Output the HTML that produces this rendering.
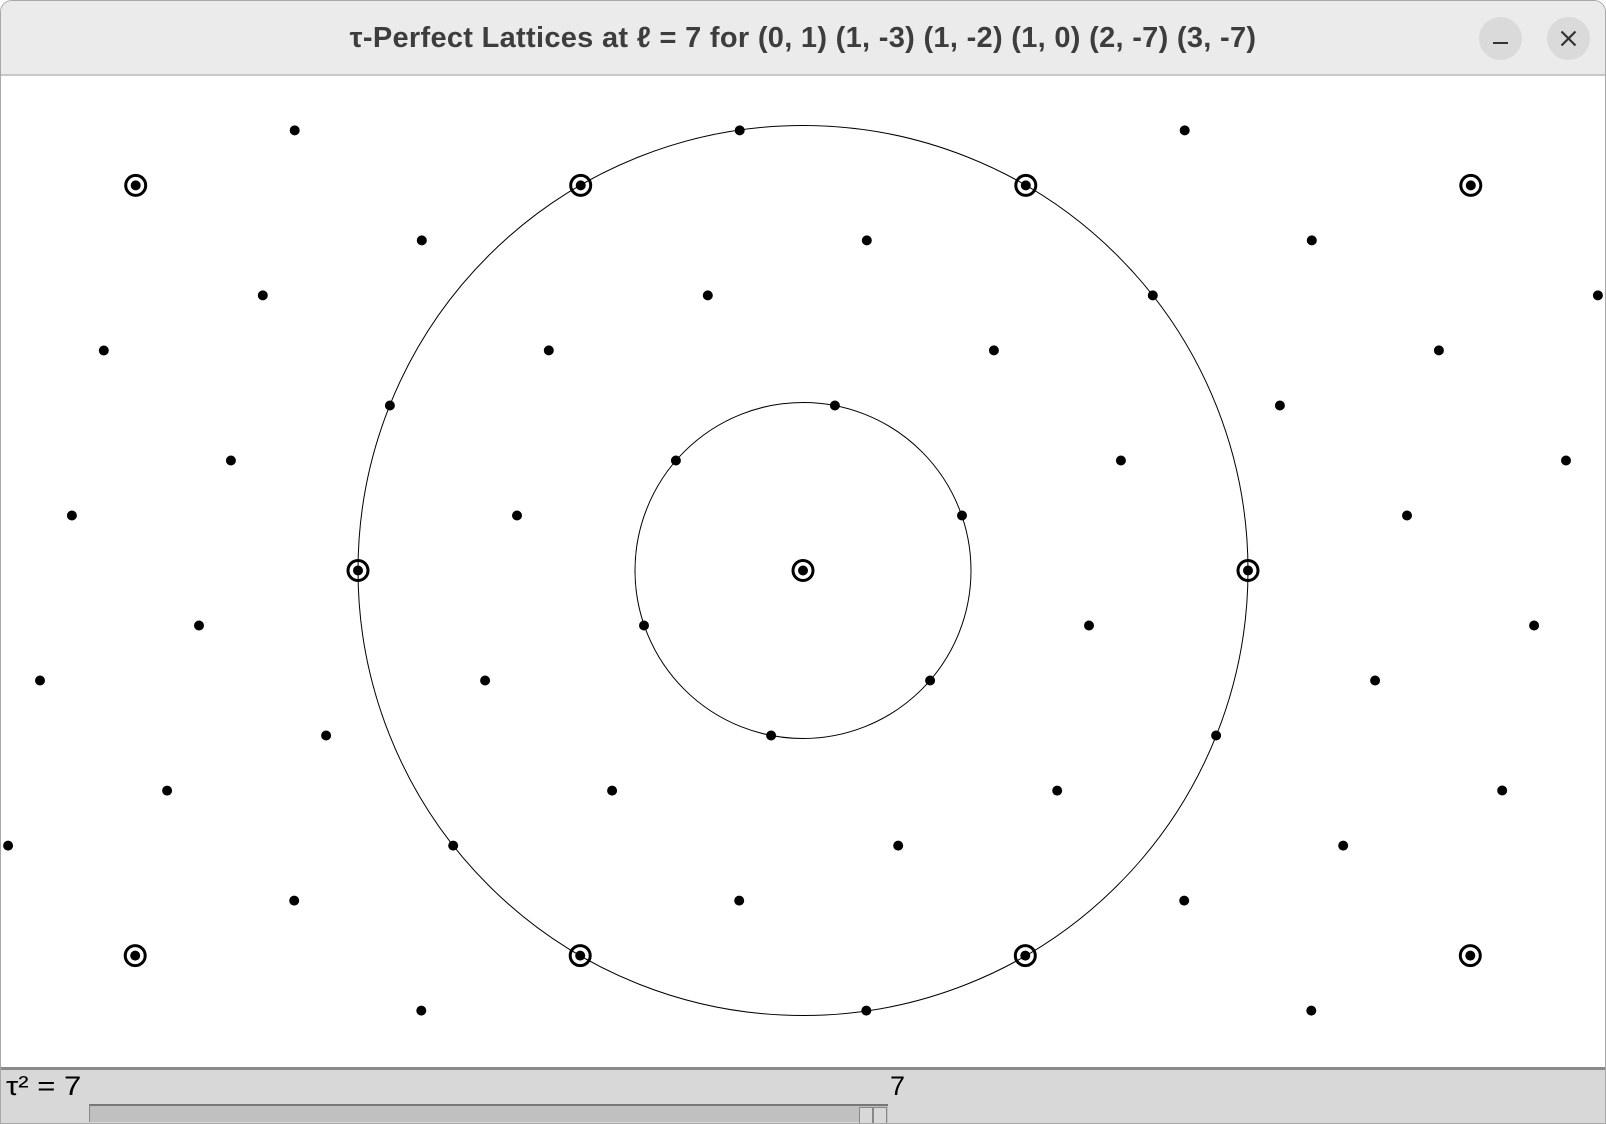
<!DOCTYPE html>
<html><head><meta charset="utf-8"><style>
html,body{margin:0;padding:0;width:1606px;height:1124px;overflow:hidden;background:#fff;font-family:"Liberation Sans",sans-serif}
#win{position:absolute;left:0;top:0;width:1604px;height:1122px;border:1px solid #a8a8a8;border-radius:12px 12px 0 0;overflow:hidden;background:#fff}
#title{position:absolute;left:0;top:0;width:1604px;height:73px;background:#ebebeb;border-bottom:2px solid #c8c8c8}
#title .t{position:absolute;left:0;width:1604px;top:21px;text-align:center;font-weight:bold;font-size:29px;letter-spacing:0.3px;color:#3d3d3d}
.btn{position:absolute;top:16px;width:43px;height:43px;border-radius:50%;background:#dadada}
#bot{position:absolute;left:0;top:1066px;width:1604px;height:58px;background:#d8d8d8;border-top:3px solid #8a8a8a}
</style></head><body>
<div id="win">
<div id="title"><div class="t">τ-Perfect Lattices at ℓ = 7 for (0, 1) (1, -3) (1, -2) (1, 0) (2, -7) (3, -7)</div>
<div class="btn" style="left:1478px"><div style="position:absolute;left:14px;top:25px;width:15px;height:2px;background:#333"></div></div>
<div class="btn" style="left:1546px"><svg width="43" height="43"><path d="M14.5 14.5L28.5 28.5M28.5 14.5L14.5 28.5" stroke="#333" stroke-width="2.2"/></svg></div>
</div>
<svg id="cv" style="position:absolute;left:0;top:0" width="1604" height="1066"></svg>
<div id="bot">
<div style="position:absolute;left:5px;top:1px;font-size:27px;color:#000;transform:scaleX(1.15);transform-origin:left">τ² = 7</div>
<div style="position:absolute;left:889px;top:1px;font-size:27px;color:#000">7</div>
<div style="position:absolute;left:88px;top:34px;width:798px;height:16px;background:#c0c0c0;border-top:2px solid #777;border-left:1px solid #888"></div>
<div style="position:absolute;left:858px;top:37px;width:12px;height:15px;border:1px solid #888;background:#d8d8d8"></div>
<div style="position:absolute;left:872px;top:37px;width:12px;height:15px;border:1px solid #888;background:#d8d8d8"></div>
</div>
</div>
<script>
var s=1.0242,cx=802,cy=569.5;
var v1=[31.14*s,-161.14*s],v2=[155.214*s,-53.714*s];
var h='<circle cx="'+cx+'" cy="'+cy+'" r="168" fill="none" stroke="#000" stroke-width="1"/>';
h+='<circle cx="'+cx+'" cy="'+cy+'" r="445" fill="none" stroke="#000" stroke-width="1"/>';
for(var i=-30;i<=30;i++)for(var j=-30;j<=30;j++){
var x=cx+i*v1[0]+j*v2[0],y=cy+i*v1[1]+j*v2[1];
if(x<-10||x>1615||y<76||y>1062)continue;
h+='<circle cx="'+x.toFixed(1)+'" cy="'+y.toFixed(1)+'" r="5" fill="#000"/>';
if((((i-2*j)%7)+7)%7==0)h+='<circle cx="'+x.toFixed(1)+'" cy="'+y.toFixed(1)+'" r="10" fill="none" stroke="#000" stroke-width="3"/>';
}
document.getElementById('cv').innerHTML=h;
</script>
</body></html>
